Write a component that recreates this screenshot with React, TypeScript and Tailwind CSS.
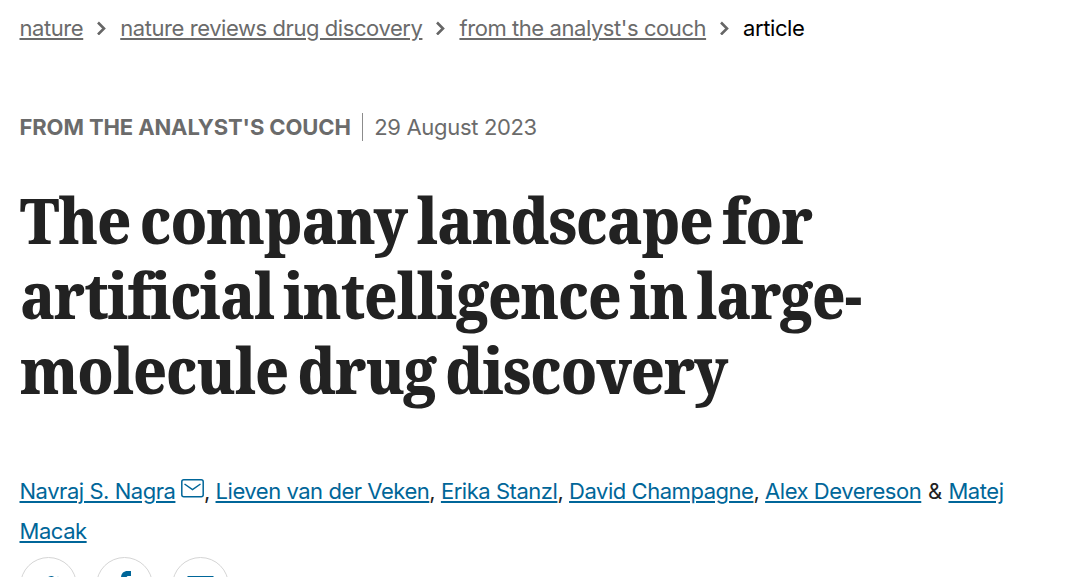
import type { ReactNode } from "react";

const crumbs = ["nature", "nature reviews drug discovery", "from the analyst's couch"];

export default function App() {
  return (
    <main className="h-[577px] w-[1080px] overflow-hidden bg-white px-[19.5px] font-['Inter',sans-serif] text-[22px] text-[#222]">
      <nav className="flex h-14 items-center tracking-[-0.43px] whitespace-nowrap">
        {crumbs.map((crumb) => (
          <span key={crumb} className="flex items-center">
            <a className="text-[#6b6b6b] underline decoration-[1.5px] underline-offset-2">{crumb}</a>
            <Chevron />
          </span>
        ))}
        <span className="text-black">article</span>
      </nav>

      <div className="mt-[55px] flex h-8 items-center whitespace-nowrap text-[#6b6b6b]">
        <span className="font-bold tracking-[-0.12px]">FROM THE ANALYST'S COUCH</span>
        <span className="mr-[11px] ml-[11px] h-7 w-[1.5px] bg-[#8c8c8c]" />
        <span className="tracking-[-0.33px]">29 August 2023</span>
      </div>

      <h1 className="mt-[39px] font-['Noto_Serif','Liberation_Serif',serif] text-[63px] leading-[75px] font-extrabold tracking-[-1.2px] whitespace-nowrap [word-spacing:-5px]">
        <span className="block origin-left scale-x-[0.932]">The company landscape for</span>
        <span className="block origin-left scale-x-[0.909]">artificial intelligence in large-</span>
        <span className="block origin-left scale-x-[0.923]">molecule drug discovery</span>
      </h1>

      <div className="mt-[65px] leading-[39.5px] tracking-[-0.46px] whitespace-nowrap">
        <p>
          <Author>Navraj S. Nagra</Author>
          <Envelope />, <Author>Lieven van der Veken</Author>, <Author>Erika Stanzl</Author>,{" "}
          <Author>David Champagne</Author>, <Author>Alex Devereson</Author>
          <span className="mx-px"> &amp; </span>
          <Author>Matej</Author>
        </p>
        <p>
          <Author>Macak</Author>
        </p>
      </div>

      <div className="mt-[6px] flex gap-[19px]">
        <ShareCircle>
          <path d="M39 21.5c-1 .4-2 .7-3 .8 1.1-.6 1.9-1.6 2.3-2.8-1 .6-2.1 1-3.300 1.300a5.300 5.300 0 0 0-9 4.800c-4.400-.2-8.300-2.300-10.900-5.500-1.400 2.400-.7 5.400 1.600 7-.8 0-1.600-.3-2.300-.7 0 2.500 1.700 4.700 4.200 5.200-.8.2-1.600.2-2.300.1.700 2 2.600 3.500 4.900 3.600a10.500 10.500 0 0 1-7.700 2.200c7.900 5 23.500 1.700 23.500-13.500z" />
        </ShareCircle>
        <ShareCircle>
          <path d="M25 42V30h-4v-5h4v-4c0-4.500 2.500-7 6.500-7H35v5h-2.500c-1.500 0-2 .8-2 2v4H35l-.7 5h-3.800v12z" />
        </ShareCircle>
        <ShareCircle>
          <path d="M15.500 19h26v20h-26zm3 3 10 8 10-8z" fillRule="evenodd" />
        </ShareCircle>
      </div>
    </main>
  );
}

function Author({ children }: { children: ReactNode }) {
  return <a className="text-[#069] underline decoration-[1.5px] underline-offset-2">{children}</a>;
}

function ShareCircle({ children }: { children: ReactNode }) {
  return (
    <a className="size-[57px] shrink-0 rounded-full border-[1.5px] border-[#d5d5d5]">
      <svg className="-m-px size-[57px]" viewBox="0 0 57 57" fill="#069">
        {children}
      </svg>
    </a>
  );
}

function Envelope() {
  return (
    <svg
      className="ml-[5.5px] inline-block h-[19px] w-[23px] align-[1px]"
      viewBox="0 0 23 19"
      fill="none"
      stroke="#069"
      strokeWidth="1.5"
    >
      <rect x=".8" y=".8" width="21.4" height="17" rx="2" />
      <path d="M3.500 5l8 5.500 8-5.500" />
    </svg>
  );
}

function Chevron() {
  return (
    <svg
      className="mx-[12px] h-[14px] w-[13px]"
      viewBox="0 0 13 14"
      fill="none"
      stroke="#666"
      strokeWidth="2.6"
    >
      <path d="M3 1.500L9 7.500l-6 6" />
    </svg>
  );
}
